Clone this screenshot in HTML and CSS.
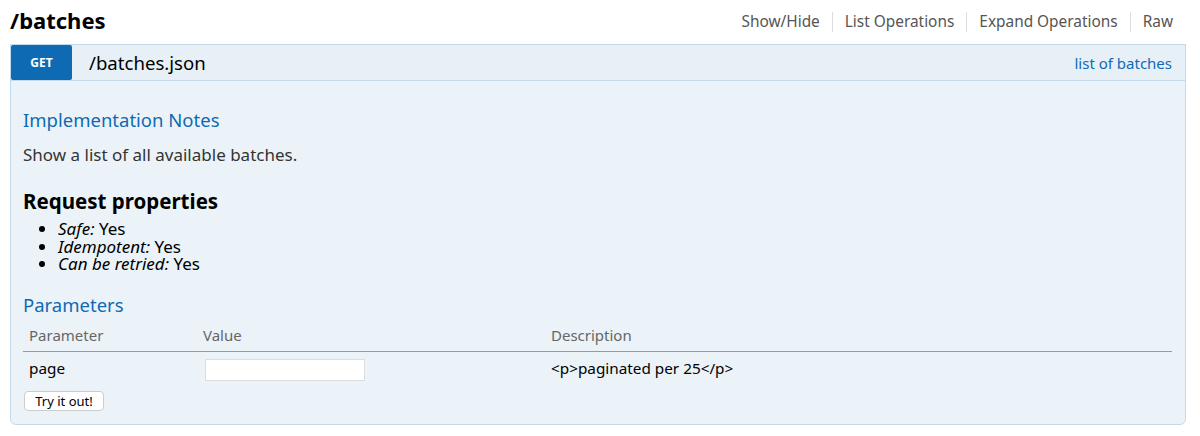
FILE: index.html
```html
<!DOCTYPE html>
<html>
<head>
<meta charset="utf-8">
<link rel="stylesheet" href="styles.css">
</head>
<body>
<div class="resource">
  <div class="heading">
    <h2 class="title">/batches</h2>
    <ul class="options">
      <li>Show/Hide</li>
      <li>List Operations</li>
      <li>Expand Operations</li>
      <li>Raw</li>
    </ul>
  </div>
  <div class="operation">
    <div class="op-head">
      <span class="method">GET</span>
      <span class="path">/batches.json</span>
      <span class="summary">list of batches</span>
    </div>
    <div class="op-body">
      <h4 class="sec">Implementation Notes</h4>
      <p class="notes">Show a list of all available batches.</p>
      <h3 class="props">Request properties</h3>
      <ul class="proplist">
        <li><em>Safe:</em> Yes</li>
        <li><em>Idempotent:</em> Yes</li>
        <li><em>Can be retried:</em> Yes</li>
      </ul>
      <h4 class="sec params-h">Parameters</h4>
      <div class="ptable">
        <div class="prow phead">
          <div class="c1">Parameter</div>
          <div class="c2">Value</div>
          <div class="c3">Description</div>
        </div>
        <div class="prow pbody">
          <div class="c1">page</div>
          <div class="c2"><input class="pinput" type="text"></div>
          <div class="c3">&lt;p&gt;paginated per 25&lt;/p&gt;</div>
        </div>
      </div>
      <button class="try">Try it out!</button>
    </div>
  </div>
</div>
</body>
</html>
```
FILE: styles.css
```css
* { box-sizing: border-box; }
body {
  margin: 0;
  background: #fff;
  font-family: "Noto Sans", "Open Sans", sans-serif;
  color: #000;
}
.resource {
  padding: 0 14px 0 10px;
}
.heading {
  display: flex;
  align-items: center;
  justify-content: space-between;
  height: 44px;
  padding-bottom: 4px;
}
.title {
  margin: 0;
  font-size: 22px;
  font-weight: bold;
  line-height: 28px;
}
.options {
  display: flex;
  list-style: none;
  margin: 4px 0 0;
  padding: 0 13px 0 0;
  font-size: 15.4px;
  color: #555;
}
.options li {
  padding: 0 12px;
  border-left: 1px solid #ddd;
  line-height: 20px;
}
.options li:first-child { border-left: none; }
.options li:last-child { padding-right: 0; }
.operation {
  border: 1px solid #c3d9ec;
  border-radius: 0 0 6px 6px;
  background: #ebf3f9;
}
.op-head {
  display: flex;
  align-items: center;
  height: 36px;
  background: #e7f0f7;
  border-bottom: 1px solid #c3d9ec;
}
.method {
  width: 61px;
  height: 35px;
  background: #0f6ab4;
  color: #fff;
  font-size: 12px;
  font-weight: bold;
  display: flex;
  align-items: center;
  justify-content: center;
  border-radius: 2px;
  align-self: flex-start;
}
.path {
  margin-left: 17px;
  font-size: 18.6px;
  color: #000;
}
.summary {
  margin-left: auto;
  margin-right: 13px;
  font-size: 15px;
  color: #0f6ab4;
}
.op-body {
  padding: 26px 13px 13px 12px;
}
.sec {
  margin: 0;
  font-size: 18.5px;
  font-weight: normal;
  color: #0f6ab4;
  line-height: 26px;
}
.notes {
  margin: 10px 0 0;
  font-size: 17px;
  color: #333;
  line-height: 24px;
}
.props {
  margin: 20px 0 0;
  font-size: 20.5px;
  font-weight: bold;
  line-height: 28px;
}
.proplist {
  margin: 5px 0 0;
  padding-left: 35px;
  font-size: 17px;
  line-height: 17.5px;
}
.proplist em { font-style: italic; }
.params-h { margin-top: 19px; }
.ptable {
  margin-top: 5px;
}
.prow {
  display: flex;
}
.phead {
  color: #666;
  font-size: 15px;
  line-height: 24px;
  height: 29px;
  border-bottom: 1px solid #999;
}
.pbody {
  font-size: 15.3px;
  line-height: 22px;
  height: 39px;
  padding-top: 5px;
}
.c1 { width: 174px; padding-left: 6px; }
.c2 { width: 348px; padding-left: 6px; }
.c3 { flex: 1; padding-left: 6px; }
.pbody .c2 { padding-left: 8px; padding-top: 2px; }
.pinput {
  display: block;
  width: 160px;
  height: 22px;
  border: 1px solid #ddd;
  background: #fff;
  margin: 0;
}
.try {
  display: block;
  margin: 0 0 0 1px;
  font-family: "Noto Sans", "Open Sans", sans-serif;
  font-size: 13px;
  height: 20px;
  width: 80px;
  padding: 0;
  background: #fff;
  border: 1px solid #ccc;
  border-radius: 4px;
  color: #000;
}
```
